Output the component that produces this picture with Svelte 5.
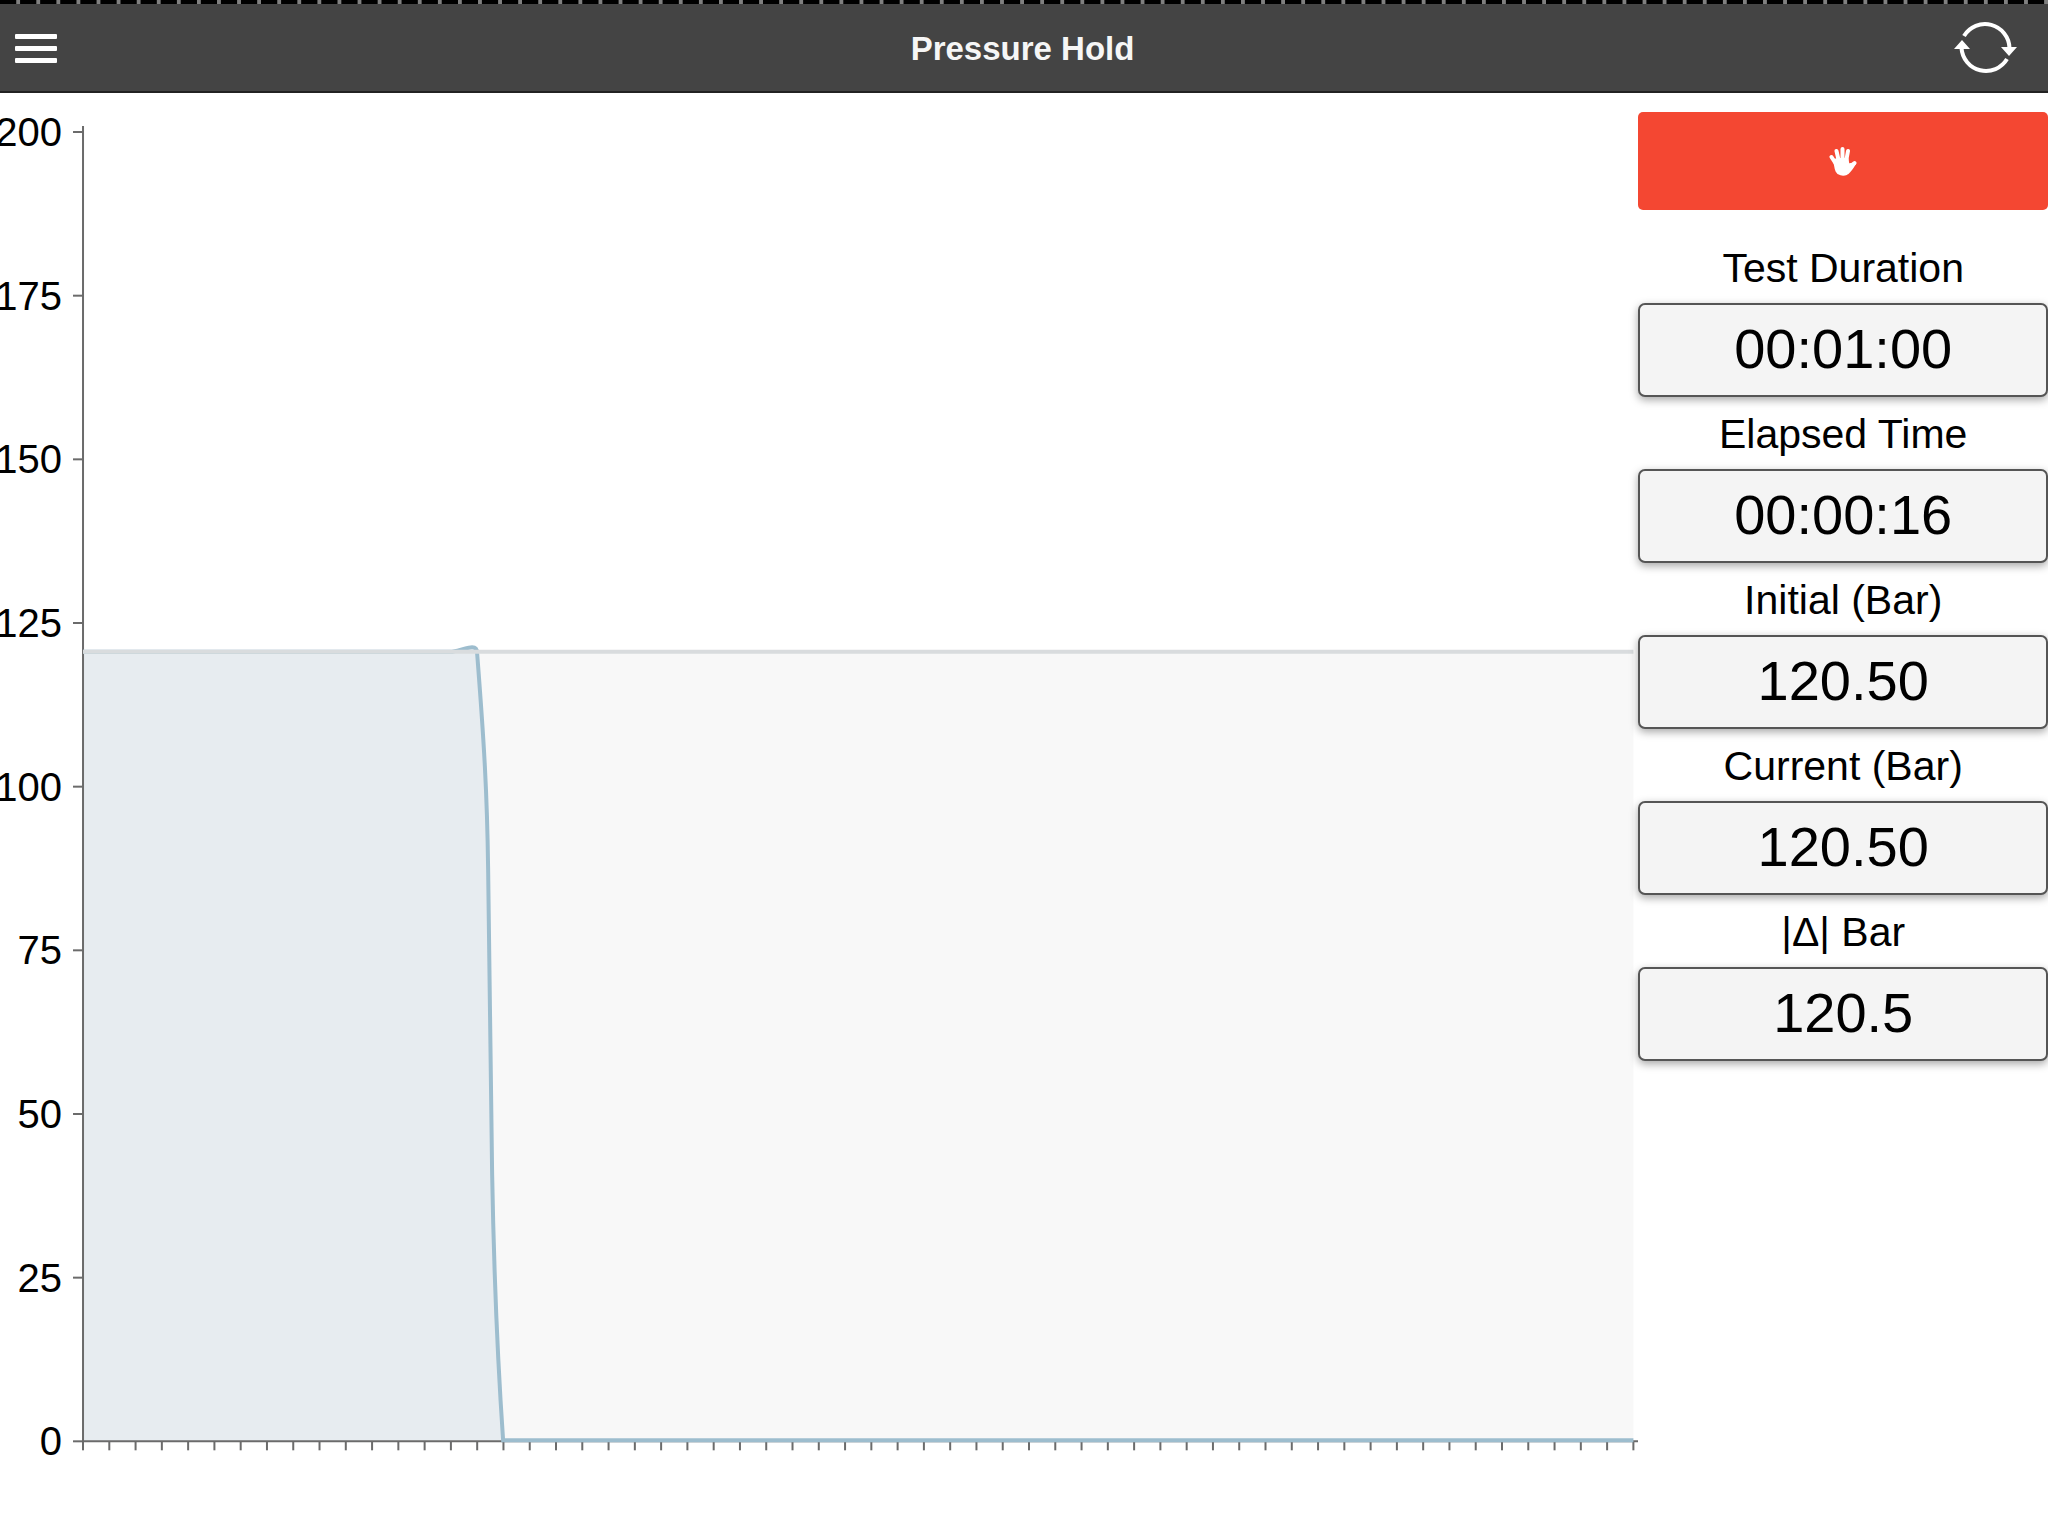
<script>
  const readings = [
    { id: 'duration', label: 'Test Duration', value: '00:01:00' },
    { id: 'elapsed', label: 'Elapsed Time', value: '00:00:16' },
    { id: 'initial', label: 'Initial (Bar)', value: '120.50' },
    { id: 'current', label: 'Current (Bar)', value: '120.50' },
    { id: 'delta', label: '|Δ| Bar', value: '120.5' }
  ];

  // Plot area in chart units
  const left = 83;
  const right = 1633;
  const top = 39;
  const bottom = 1348;
  const maxBar = 200;
  const seconds = 59;

  const yOf = (bar) => bottom - (bar / maxBar) * (bottom - top);
  const xOf = (s) => left + (s / seconds) * (right - left);

  const yTicks = [0, 25, 50, 75, 100, 125, 150, 175, 200];
  const xTicks = Array.from({ length: seconds + 1 }, (_, i) => i);
  const initialY = yOf(120.6);
  const baseline = bottom - 1;
  const curve = `M${left} ${initialY} L452 ${initialY} C462 557 467 554 472 554 Q477 554 477 560 C484 650 487 700 488 775 C490 860 490 960 492 1080 C494 1190 497 1260 503 ${baseline}`;
</script>

<div class="app">
  <header>
    <div class="edge"></div>
    <div class="bar">
      <button class="icon" aria-label="Menu">
        <svg width="44" height="32" viewBox="0 0 44 32" fill="#fff">
          <rect x="1" y="2" width="42" height="5" rx="1" />
          <rect x="1" y="14" width="42" height="5" rx="1" />
          <rect x="1" y="26" width="42" height="5" rx="1" />
        </svg>
      </button>
      <h1>Pressure Hold</h1>
      <button class="icon" aria-label="Refresh">
        <svg width="64" height="56" viewBox="0 0 64 56">
          <g fill="none" stroke="#fff" stroke-width="4">
            <path d="M11 16 A24.5 24.5 0 0 1 56.500 28" />
            <path d="M8.500 28 A24.500 24.500 0 0 0 54 39" />
          </g>
          <path fill="#fff" d="M48 27h16l-8 9zM1 29h16l-8-9z" />
        </svg>
      </button>
    </div>
  </header>

  <main>
    <section class="chart">
      <svg viewBox="0 0 1638 1400" role="img" aria-label="Pressure over time">
        <rect x={left} y={initialY} width={right - left} height={bottom - initialY} fill="#f8f8f8" />
        <path d="{curve} L{left} {bottom} Z" fill="#e7ecf0" />
        <g stroke="#6b6b6b" stroke-width="2">
          <line x1={left} y1="33" x2={left} y2={bottom} />
          <line x1={left} y1={bottom} x2="1638" y2={bottom} />
          {#each yTicks as t}
            <line x1="73" x2={left} y1={yOf(t)} y2={yOf(t)} />
          {/each}
          {#each xTicks as t}
            <line x1={xOf(t)} x2={xOf(t)} y1={bottom} y2={bottom + 9} />
          {/each}
        </g>
        <path d="{curve} L{right} {baseline}" fill="none" stroke="#9dbdce" stroke-width="4" />
        <line x1={left} x2={right} y1={initialY} y2={initialY} stroke="#d9dcde" stroke-width="4" />
        {#each yTicks as t}
          <text x="62" y={yOf(t) + 14} text-anchor="end">{t}</text>
        {/each}
      </svg>
    </section>

    <aside>
      <button class="stop" aria-label="Stop test">
        <svg width="28" height="30" viewBox="0 0 28 30" fill="none" stroke="#fff" stroke-linecap="round" stroke-linejoin="round">
          <path stroke-width="4" d="M7 18 2.500 11M10 16 7.500 5M13.500 15V3M17 16 19 5" />
          <path stroke-width="4" d="M19 22 25.500 17" />
          <path fill="#fff" stroke-width="2" d="M5 14 9 13 18.500 13 19.500 19 22 18 26 18C23 22 21 26 17.500 28C14 29.500 9 28.500 7.500 25C6 22 6 18 5 14Z" />
        </svg>
      </button>
      {#each readings as r}
        <label for={r.id}>{r.label}</label>
        <input id={r.id} type="text" readonly value={r.value} />
      {/each}
    </aside>
  </main>
</div>

<style>
  :global(body) {
    margin: 0;
    background: #fff;
  }
  .app {
    min-height: 100vh;
    overflow-x: hidden;
    font-family: 'Liberation Sans', Arial, sans-serif;
    color: #000;
  }
  header {
    background: #444;
    border-bottom: 2px solid #222;
  }
  .edge {
    height: 4px;
    background: linear-gradient(90deg, #000 80%, #808080 80%);
    background-size: calc(100% / 102) 4px;
  }
  .bar {
    display: grid;
    grid-template-columns: 1fr auto 1fr;
    align-items: center;
    height: 87px;
    padding: 0 31px 0 14px;
  }
  h1 {
    margin: 0;
    padding: 2px 0 0 14px;
    font-size: 33px;
    line-height: 40px;
    color: #f6f6f6;
  }
  button {
    margin: 0;
    border: 0;
    padding: 0;
    background: none;
    cursor: pointer;
  }
  .icon {
    display: flex;
    justify-self: start;
  }
  .icon:last-child {
    justify-self: end;
  }
  main {
    display: grid;
    grid-template-columns: 4fr 1fr;
    align-items: start;
  }
  .chart svg {
    display: block;
    width: 100%;
  }
  text {
    font-size: 40px;
  }
  aside {
    display: flex;
    flex-direction: column;
    padding-top: 19px;
  }
  .stop {
    display: flex;
    align-items: center;
    justify-content: center;
    height: 98px;
    margin-bottom: 21px;
    border-radius: 5px;
    background: #f44732;
  }
  label {
    box-sizing: border-box;
    height: 72px;
    padding-top: 2px;
    font-size: 41px;
    line-height: 70px;
    text-align: center;
  }
  input {
    box-sizing: border-box;
    width: 100%;
    height: 94px;
    margin: 0;
    padding: 0 0 4px;
    border: 2px solid #555;
    border-radius: 7px;
    background: #f4f4f4;
    box-shadow: 0 3px 8px rgba(0, 0, 0, 0.35);
    font-family: inherit;
    font-size: 56px;
    color: #000;
    text-align: center;
  }
</style>
